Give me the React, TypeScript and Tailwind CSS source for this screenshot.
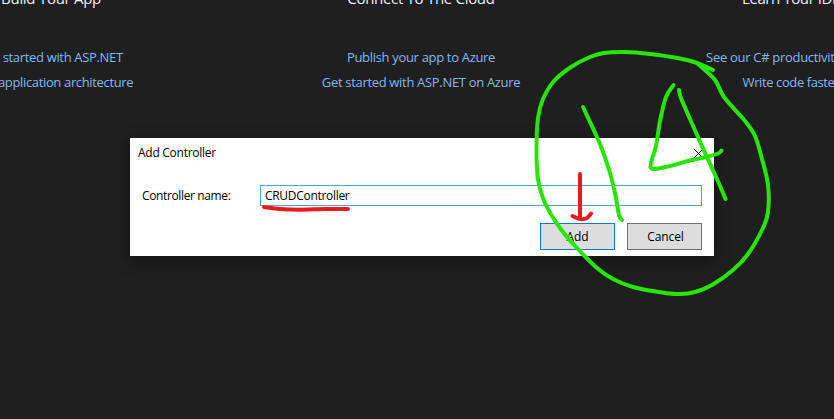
import React from "react";

type Line = { text: string; tracking: string };
type Column = { title: Line; links: Line[] };
type Point = [number, number];

const columns: Column[] = [
  {
    title: { text: "Build Your App", tracking: "tracking-[-0.3px]" },
    links: [
      { text: "Get started with ASP.NET", tracking: "tracking-[-0.33px]" },
      { text: ".NET application architecture", tracking: "tracking-[-0.35px]" },
    ],
  },
  {
    title: { text: "Connect To The Cloud", tracking: "tracking-[-0.3px]" },
    links: [
      { text: "Publish your app to Azure", tracking: "tracking-[-0.32px]" },
      { text: "Get started with ASP.NET on Azure", tracking: "tracking-[-0.32px]" },
    ],
  },
  {
    title: { text: "Learn Your IDE", tracking: "tracking-[-0.42px]" },
    links: [
      { text: "See our C# productivity guide", tracking: "tracking-[-0.3px]" },
      { text: "Write code faster", tracking: "tracking-[-0.4px]" },
    ],
  },
];

// Freehand strokes, as the points the pen passed through.
const greenStrokes: Point[][] = [
  [
    [713, 70], [697, 63], [680, 58.5], [650, 54], [625, 52], [604, 53], [590, 57], [571, 67], [554, 81],
    [543, 99], [538, 118], [536.5, 150], [538, 179], [545, 203], [560, 228], [577, 248], [597, 268],
    [613, 279], [633, 287], [662, 292.5], [680, 294], [695, 292], [712, 285], [733, 270], [748, 254],
    [763, 228], [768, 212], [768, 185], [762, 159], [755, 136], [745, 121], [724, 97], [715, 80], [697, 63],
  ],
  [[583, 107], [600, 144], [610, 173], [615, 193], [619, 215], [622, 220]],
  [
    [673.5, 85], [666, 97], [660, 121], [656, 146], [651, 163], [653, 169], [670, 166], [688, 161],
    [706, 157], [718, 153.5], [721.5, 150.5],
  ],
  [[679, 90], [681, 98], [690, 119], [706, 155], [717, 179], [725.5, 199]],
];

const redStrokes: Point[][] = [
  [[264, 207], [280, 209], [300, 209.7], [325, 209], [348, 209]],
  [[580, 174], [580, 217]],
  [[572.5, 216], [580, 219], [587, 218], [591, 213.5]],
];

function smoothPath(points: Point[]): string {
  const at = (i: number) => points[Math.max(0, Math.min(points.length - 1, i))];
  let d = `M${points[0].join(" ")}`;
  for (let i = 0; i < points.length - 1; i++) {
    const [a, b, c, e] = [at(i - 1), at(i), at(i + 1), at(i + 2)];
    d += `C${b[0] + (c[0] - a[0]) / 6} ${b[1] + (c[1] - a[1]) / 6} ${c[0] - (e[0] - b[0]) / 6} ${c[1] - (e[1] - b[1]) / 6} ${c[0]} ${c[1]}`;
  }
  return d;
}

function StartPage() {
  return (
    <div className="-ml-[134px] flex w-[1110px]">
      {columns.map((c) => (
        <section key={c.title.text} className="flex w-[370px] flex-col items-center whitespace-nowrap">
          <h2 className={`-mt-[14px] h-[59px] text-[15px] leading-6 text-[#f1f1f1] ${c.title.tracking}`}>
            {c.title.text}
          </h2>
          {c.links.map((l) => (
            <a key={l.text} className={`h-[25px] text-[13px] leading-[25px] text-[#82b8f5] ${l.tracking}`}>
              {l.text}
            </a>
          ))}
        </section>
      ))}
    </div>
  );
}

function AddControllerDialog() {
  return (
    <div className="absolute left-[130px] top-[138px] flex h-[118px] w-[584px] flex-col bg-white text-[12px] text-black shadow-[0_4px_14px_1px_rgba(0,0,0,0.4)]">
      <div className="flex h-[30px] items-center justify-between pl-2 pr-[10px]">
        <span className="tracking-[-0.27px]">Add Controller</span>
        <svg className="h-[11px] w-[11px]" viewBox="0 0 11 11" stroke="#000" strokeWidth="1">
          <path d="M.8.8l9.4 9.4M10.2.8L.8 10.2" />
        </svg>
      </div>
      <div className="mt-[17px] flex h-[21px] items-center pl-3">
        <label className="w-[118px] tracking-[-0.37px]">Controller name:</label>
        <div className="flex h-[21px] w-[442px] items-center border border-[#569de5] pl-1 tracking-[-0.3px]">
          CRUDController
        </div>
      </div>
      <div className="mt-[17px] flex justify-end gap-3 pr-3">
        <button className="h-[27px] w-[75px] border border-[#0078d7] bg-[#ddd]">Add</button>
        <button className="h-[27px] w-[75px] border border-[#707070] bg-[#ddd] pl-[2px] tracking-[-0.1px]">
          Cancel
        </button>
      </div>
    </div>
  );
}

function Annotations() {
  return (
    <svg
      className="pointer-events-none absolute left-0 top-0 h-[419px] w-[834px]"
      viewBox="0 0 834 419"
      fill="none"
      strokeLinecap="round"
      strokeLinejoin="round"
      strokeWidth="4"
    >
      <g stroke="#e81c1c">
        {redStrokes.map((s, i) => (
          <path key={i} d={smoothPath(s)} />
        ))}
      </g>
      <g stroke="#26e600">
        {greenStrokes.map((s, i) => (
          <path key={i} d={smoothPath(s)} />
        ))}
      </g>
    </svg>
  );
}

export default function App() {
  return (
    <main className="relative h-[419px] w-[834px] overflow-hidden bg-[#1f1f1f] font-['Open_Sans','Noto_Sans',sans-serif]">
      <StartPage />
      <AddControllerDialog />
      <Annotations />
    </main>
  );
}
